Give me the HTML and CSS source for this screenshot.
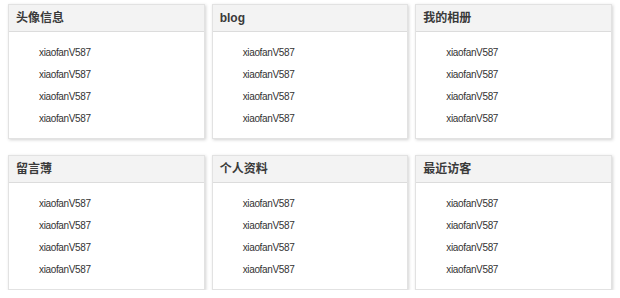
FILE: index.html
```html
<!DOCTYPE html>
<html lang="zh">
<head>
<meta charset="utf-8">
<link rel="stylesheet" href="styles.css">
</head>
<body>
<div class="grid">
  <div class="card"><div class="head">头像信息</div><ul class="list"><li>xiaofanV587</li><li>xiaofanV587</li><li>xiaofanV587</li><li>xiaofanV587</li></ul></div>
  <div class="card"><div class="head">blog</div><ul class="list"><li>xiaofanV587</li><li>xiaofanV587</li><li>xiaofanV587</li><li>xiaofanV587</li></ul></div>
  <div class="card"><div class="head">我的相册</div><ul class="list"><li>xiaofanV587</li><li>xiaofanV587</li><li>xiaofanV587</li><li>xiaofanV587</li></ul></div>
  <div class="card"><div class="head">留言薄</div><ul class="list"><li>xiaofanV587</li><li>xiaofanV587</li><li>xiaofanV587</li><li>xiaofanV587</li></ul></div>
  <div class="card"><div class="head">个人资料</div><ul class="list"><li>xiaofanV587</li><li>xiaofanV587</li><li>xiaofanV587</li><li>xiaofanV587</li></ul></div>
  <div class="card"><div class="head">最近访客</div><ul class="list"><li>xiaofanV587</li><li>xiaofanV587</li><li>xiaofanV587</li><li>xiaofanV587</li></ul></div>
</div>
</body>
</html>
```
FILE: styles.css
```css
html, body {
  margin: 0;
  padding: 0;
  background: #fff;
}
body {
  padding: 4px 8px 0 8px;
  font-family: "Liberation Sans", "Noto Sans CJK SC", sans-serif;
  color: #333;
}
.grid {
  display: grid;
  grid-template-columns: repeat(3, 1fr);
  column-gap: 7px;
  row-gap: 16px;
}
.card {
  border: 1px solid #e2e2e2;
  box-shadow: 1px 1px 3px rgba(0, 0, 0, 0.18);
  background: #fff;
  height: 133px;
}
.head {
  height: 26px;
  line-height: 26px;
  background: #f3f3f3;
  border-bottom: 1px solid #dcdcdc;
  padding-left: 7px;
  font-size: 12px;
  font-weight: bold;
  color: #3a3a3a;
}
.list {
  list-style: none;
  margin: 0;
  padding: 10px 0 0 30px;
}
.list li {
  height: 22px;
  line-height: 22px;
  font-size: 10px;
  letter-spacing: -0.35px;
  color: #333;
}
```
